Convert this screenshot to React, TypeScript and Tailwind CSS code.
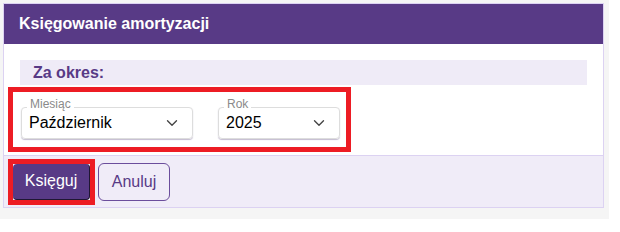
import { ChevronDown } from "lucide-react";

const selects = [
  { label: "Miesiąc", value: "Październik", width: "w-[172px]" },
  { label: "Rok", value: "2025", width: "w-[122px]" },
];

export default function App() {
  return (
    <div className="w-[609px] h-[219px] bg-[#f5f5f5] pl-[3px] pt-[3px] font-['Liberation_Sans',Arial,sans-serif]">
      <div className="w-[601px] border border-[#dcd2f2] bg-white">
        {/* Header */}
        <div className="h-[40px] bg-[#583a86] pl-[15px] flex items-center text-white font-bold text-[16px]">
          Księgowanie amortyzacji
        </div>

        {/* Body */}
        <div className="pt-[16px] pb-[3px]">
          <div className="mx-[16px] h-[25px] bg-[#efebf7] pl-[13px] flex items-center text-[16px] font-bold text-[#583a86]">
            Za okres:
          </div>

          <div className="ml-[4px] mt-[2px] w-[343px] h-[65px] border-[5px] border-[#ed1c24] pl-[8px] pt-[15px] flex gap-[25px]">
            {selects.map((s) => (
              <div
                key={s.label}
                className={`relative ${s.width} h-[32px] rounded-[4px] border border-[#dddddd] shadow-[0_1px_1px_rgba(80,60,120,0.35)] flex items-center pl-[7px] pr-[11px]`}
              >
                <span className="absolute -top-[11px] left-[5px] bg-white px-[3px] text-[12px] leading-[14px] text-[#8a8a8a]">
                  {s.label}
                </span>
                <span className="flex-1 text-[16px] text-black -mt-[1px]">
                  {s.value}
                </span>
                <ChevronDown size={18} strokeWidth={1.8} className="text-[#444]" />
              </div>
            ))}
          </div>
        </div>

        {/* Footer */}
        <div className="h-[52px] border-t border-[#dcd2f2] bg-[#f0ecf8] pl-[4px] flex items-center">
          <div className="w-[87px] h-[46px] border-[5px] border-[#ed1c24]">
            <button className="w-full h-full rounded-[4px] bg-[#583a86] border-r border-b border-[#1f1633] text-white text-[16px]">
              Księguj
            </button>
          </div>
          <button className="ml-[3px] w-[72px] h-[38px] rounded-[6px] border border-[#6b4d9c] text-[#583a86] text-[16px]">
            Anuluj
          </button>
        </div>
      </div>
    </div>
  );
}
